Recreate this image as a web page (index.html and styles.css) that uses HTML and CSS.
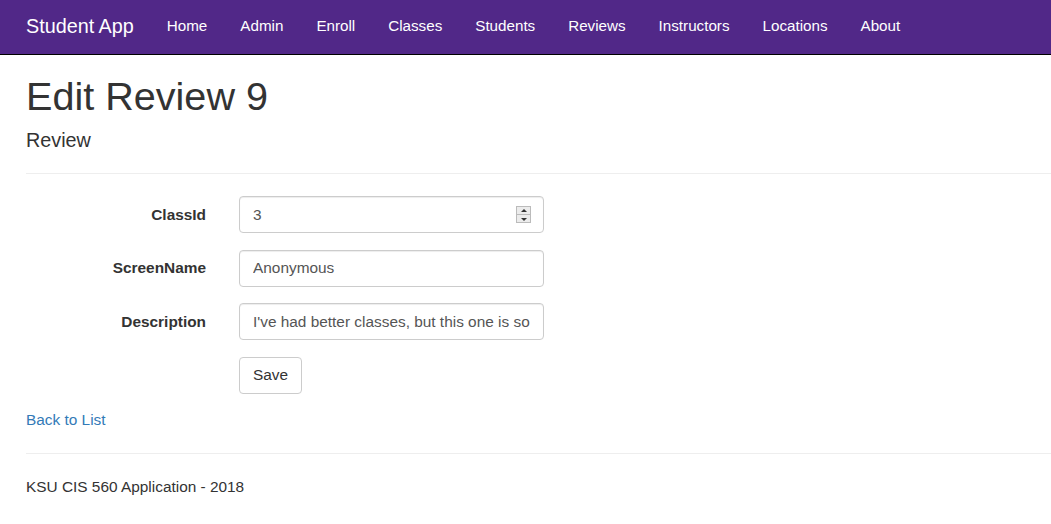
FILE: index.html
```html
<!DOCTYPE html>
<html>
<head>
<meta charset="utf-8">
<title>Edit Review 9</title>
<link rel="stylesheet" href="styles.css">
</head>
<body>
<nav class="navbar">
  <a class="brand" href="#">Student App</a>
  <ul class="nav">
    <li><a href="#">Home</a></li>
    <li><a href="#">Admin</a></li>
    <li><a href="#">Enroll</a></li>
    <li><a href="#">Classes</a></li>
    <li><a href="#">Students</a></li>
    <li><a href="#">Reviews</a></li>
    <li><a href="#">Instructors</a></li>
    <li><a href="#">Locations</a></li>
    <li><a href="#">About</a></li>
  </ul>
</nav>
<main class="content">
  <h1 class="title">Edit Review 9</h1>
  <h4 class="subtitle">Review</h4>
  <hr class="rule">
  <form class="form">
    <div class="row">
      <label class="label" for="classid">ClassId</label>
      <div class="control number">
        <input class="input" id="classid" type="text" value="3">
        <span class="spinner"><span class="spin up"></span><span class="spin down"></span></span>
      </div>
    </div>
    <div class="row">
      <label class="label" for="screenname">ScreenName</label>
      <div class="control"><input class="input" id="screenname" type="text" value="Anonymous"></div>
    </div>
    <div class="row">
      <label class="label" for="description">Description</label>
      <div class="control"><input class="input" id="description" type="text" value="I've had better classes, but this one is solid."></div>
    </div>
    <div class="row">
      <span class="label"></span>
      <button type="button" class="btn">Save</button>
    </div>
  </form>
  <div class="back"><a href="#">Back to List</a></div>
  <hr class="rule footer-rule">
  <footer class="footer">KSU CIS 560 Application - 2018</footer>
</main>
</body>
</html>
```
FILE: styles.css
```css
* { box-sizing: border-box; }
html, body { margin: 0; padding: 0; }
body {
  font-family: "Liberation Sans", Arial, Helvetica, sans-serif;
  font-size: 15.4px;
  line-height: 1.42857;
  color: #333;
  background: #fff;
  overflow: hidden;
}
a { text-decoration: none; }

.navbar {
  display: flex;
  align-items: center;
  height: 55px;
  background: #512888;
  border-bottom: 1px solid #000;
  padding-left: 9.5px;
}
.brand {
  color: #fff;
  font-size: 19.8px;
  padding: 0 16.5px;
  line-height: 22px;
  margin-top: -2px;
}
.nav {
  display: flex;
  list-style: none;
  margin: 0;
  padding: 0;
}
.nav a {
  display: block;
  color: #fff;
  font-size: 15.2px;
  padding: 0 16.5px;
  line-height: 22px;
  margin-top: -2px;
}

.content { padding-left: 26px; }
.title {
  margin: 20px 0 11px;
  font-size: 39.6px;
  font-weight: 500;
  line-height: 1.1;
  color: #333;
}
.subtitle {
  margin: 11px 0 11px;
  font-size: 19.8px;
  font-weight: 500;
  line-height: 1.1;
}
.rule {
  margin: 22px 0 22px;
  border: 0;
  border-top: 1px solid #eee;
}

.form { display: flex; flex-direction: column; gap: 16.5px; }
.row { display: flex; align-items: center; }
.label {
  width: 180px;
  text-align: right;
  font-weight: bold;
  margin-right: 33px;
}
.control {
  width: 305px;
  height: 37px;
  border: 1px solid #ccc;
  border-radius: 4px;
  display: flex;
  align-items: center;
  padding: 0 13px;
  box-shadow: inset 0 1px 1px rgba(0,0,0,.075);
  overflow: hidden;
}
.input {
  flex: 1;
  min-width: 0;
  border: 0;
  padding: 0;
  margin: 0;
  outline: none;
  background: transparent;
  font-family: inherit;
  font-size: 15.4px;
  color: #555;
  height: 22px;
}
.spinner {
  display: flex;
  flex-direction: column;
  width: 15px;
  height: 17px;
  border: 1px solid #bbb;
  background: #ececec;
  margin-right: -1px;
}
.spin { flex: 1; position: relative; }
.spin.up { border-bottom: 1px solid #bbb; }
.spin.up::after, .spin.down::after {
  content: "";
  position: absolute;
  left: 4px;
  top: 2px;
  border-left: 3px solid transparent;
  border-right: 3px solid transparent;
}
.spin.up::after { border-bottom: 3px solid #333; }
.spin.down::after { border-top: 3px solid #333; top: 3px; }

.btn {
  height: 37px;
  width: 63px;
  border: 1px solid #ccc;
  border-radius: 4px;
  background: #fff;
  color: #333;
  font-family: inherit;
  font-size: 15.4px;
  padding: 0;
}

.back { margin-top: 15px; line-height: 22px; }
.back a { color: #337ab7; }
.footer-rule { margin: 22px 0 22px; }
.footer { line-height: 22px; }
```
